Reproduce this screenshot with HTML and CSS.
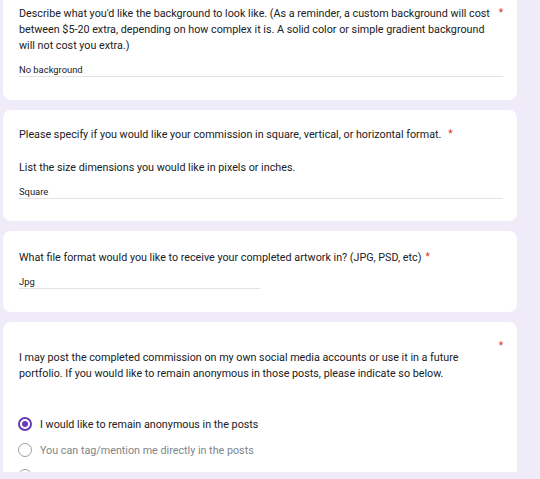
FILE: index.html
```html
<!DOCTYPE html>
<html>
<head>
<meta charset="utf-8">
<link rel="stylesheet" href="styles.css">
</head>
<body>
<div class="page">
  <section class="card card-1">
    <div class="title">
      <span class="qtext">Describe what you'd like the background to look like. (As a reminder, a custom background will cost between $5-20 extra, depending on how complex it is. A solid color or simple gradient background will not cost you extra.)</span>
      <span class="req">*</span>
    </div>
    <div class="answer">No background</div>
  </section>

  <section class="card card-2">
    <div class="title">
      <span class="qtext">Please specify if you would like your commission in square, vertical, or horizontal format.</span>
      <span class="req">*</span>
    </div>
    <div class="desc">List the size dimensions you would like in pixels or inches.</div>
    <div class="answer">Square</div>
  </section>

  <section class="card card-3">
    <div class="title">
      <span class="qtext">What file format would you like to receive your completed artwork in? (JPG, PSD, etc)</span>
      <span class="req req-tight">*</span>
    </div>
    <div class="answer answer-short">Jpg</div>
  </section>

  <section class="card card-4">
    <div class="title">
      <span class="qtext"><br>I may post the completed commission on my own social media accounts or use it in a future portfolio. If you would like to remain anonymous in those posts, please indicate so below.</span>
      <span class="req req-4">*</span>
    </div>
    <div class="options">
      <div class="option checked"><span class="radio"></span><span class="label">I would like to remain anonymous in the posts</span></div>
      <div class="option muted"><span class="radio"></span><span class="label">You can tag/mention me directly in the posts</span></div>
      <div class="option muted"><span class="radio"></span><span class="label">Other</span></div>
    </div>
  </section>
</div>
</body>
</html>
```

FILE: styles.css
```css
html, body {
  margin: 0;
  padding: 0;
  background: #efebf8;
  height: 100%;
  overflow: hidden;
}

body {
  font-family: Roboto, "Liberation Sans", Arial, sans-serif;
  color: #202124;
}

.page {
  width: 514px;
  margin: -20px 0 0 3px;
  display: flex;
  flex-direction: column;
  gap: 10px;
}

.card {
  background: #ffffff;
  border-radius: 8px;
  padding: 0 14px 24px 16px;
}

.title {
  display: flex;
  align-items: flex-start;
  font-size: 10.75px;
  line-height: 16px;
}

.qtext {
  flex: 0 1 auto;
  max-width: 473px;
}

.req {
  color: #d93025;
  padding-left: 7px;
  font-size: 10px;
  line-height: 14px;
}

.req-tight {
  padding-left: 4px;
}

.desc {
  font-size: 10.75px;
  line-height: 16px;
  margin-top: 17px;
}

.answer {
  font-size: 9.4px;
  line-height: 12px;
  border-bottom: 1px solid #e4e4e4;
  margin-top: 12px;
}

.answer-short {
  width: 241px;
}

.card-1 {
  padding-top: 26px;
  padding-bottom: 23px;
}

.card-1 .answer {
  margin-top: 10px;
}

.card-2 {
  padding-top: 17px;
  padding-bottom: 22px;
}

.card-2 .desc + .answer {
  margin-top: 10px;
}

.card-3 {
  padding-top: 19px;
  padding-bottom: 23px;
}

.card-3 .answer {
  margin-top: 10px;
}

.card-4 {
  padding-top: 12px;
  padding-bottom: 0;
  height: 150px;
  box-sizing: border-box;
  overflow: hidden;
  border-radius: 8px 8px 0 0;
}

.req-4 {
  margin-top: 5px;
}

.options {
  margin-top: 29px;
  margin-left: -1px;
}

.option {
  display: flex;
  align-items: center;
  height: 26px;
  font-size: 10.75px;
}

.radio {
  width: 14px;
  height: 14px;
  box-sizing: border-box;
  border-radius: 50%;
  border: 1.5px solid #9aa0a6;
  margin-right: 8px;
  display: flex;
  align-items: center;
  justify-content: center;
  flex: none;
}

.checked .radio {
  border: 2px solid #673ab7;
}

.checked .radio::after {
  content: "";
  width: 6px;
  height: 6px;
  border-radius: 50%;
  background: #673ab7;
}

.muted .label {
  color: #80868b;
}
```
